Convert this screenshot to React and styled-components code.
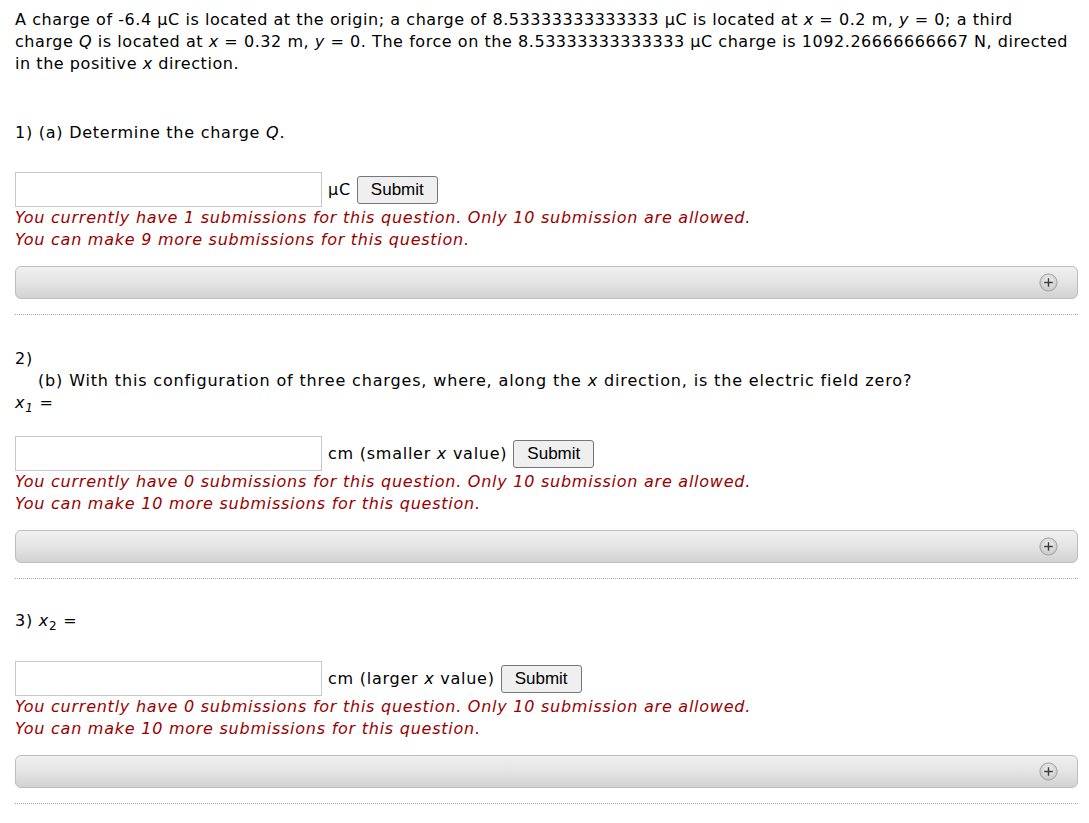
import React from "react";
import styled, { createGlobalStyle } from "styled-components";

const GlobalStyle = createGlobalStyle`
  html, body { margin: 0; padding: 0; background: #fff; }
  body { font-family: "DejaVu Sans", Verdana, sans-serif; color: #000; }
`;

const Page = styled.div`
  padding: 9px 11px 20px 15px;
  font-size: 16px;
  line-height: 22px;
  letter-spacing: 0.75px;
`;

const Intro = styled.p`
  margin: 0 0 47px;
  letter-spacing: 0.55px;
`;

const Section = styled.section`
  padding-top: ${(p) => p.$top || 0}px;
`;

const Question = styled.div`
  margin-bottom: ${(p) => p.$gap}px;
`;

const Indent = styled.div`
  padding-left: 23px;
  letter-spacing: 0.85px;
`;

const Sub = styled.sub`
  font-size: 12px;
  line-height: 0;
`;

const Row = styled.div`
  display: flex;
  align-items: center;
  height: 35px;
  gap: 6px;
`;

const Field = styled.input`
  box-sizing: border-box;
  width: 307px;
  height: 35px;
  border: 1px solid #c8c8c8;
  border-radius: 0;
  padding: 0 6px;
  font: inherit;
  outline: none;
`;

const Unit = styled.span`
  white-space: nowrap;
`;

const Button = styled.button`
  box-sizing: border-box;
  height: 28px;
  padding: 0 13px;
  font-family: "Liberation Sans", Arial, sans-serif;
  font-size: 17px;
  letter-spacing: 0;
  color: #000;
  background: #efefef;
  border: 1px solid #767676;
  border-radius: 3px;
`;

const Notice = styled.div`
  color: #990000;
  font-style: italic;
`;

const Bar = styled.div`
  box-sizing: border-box;
  margin-top: 15px;
  height: 33px;
  display: flex;
  align-items: center;
  justify-content: flex-end;
  padding-right: 19px;
  border: 1px solid #bdbdbd;
  border-radius: 6px;
  background: linear-gradient(to bottom, #f0f0f0 0%, #e4e4e4 50%, #d2d2d2 100%);
`;

const Rule = styled.hr`
  margin: 15px 0 0;
  border: 0;
  border-top: 1px dotted #a8a8a8;
  height: 0;
`;

const PlusIcon = () => (
  <svg width="19" height="19" viewBox="0 0 19 19" aria-hidden>
    <defs>
      <radialGradient id="pg" cx="50%" cy="40%" r="60%">
        <stop offset="0%" stopColor="#f4f4f4" />
        <stop offset="100%" stopColor="#c4c4c4" />
      </radialGradient>
    </defs>
    <circle cx="9.5" cy="9.5" r="8.6" fill="url(#pg)" stroke="#a3a3a3" strokeWidth="1" />
    <path d="M9.5 5.2v8.6M5.2 9.5h8.6" stroke="#3c3c3c" strokeWidth="1.5" />
  </svg>
);

const Answer = ({ unit, used, left }) => (
  <>
    <Row>
      <Field type="text" />
      <Unit>{unit}</Unit>
      <Button>Submit</Button>
    </Row>
    <Notice>
      You currently have {used} submissions for this question. Only 10 submission are allowed.
      <br />
      You can make {left} more submissions for this question.
    </Notice>
    <Bar>
      <PlusIcon />
    </Bar>
    <Rule />
  </>
);

export default function App() {
  return (
    <>
      <GlobalStyle />
      <Page>
        <Intro>
          A charge of -6.4 μC is located at the origin; a charge of 8.53333333333333 μC is located at{" "}
          <i>x</i> = 0.2 m, <i>y</i> = 0; a third
          <br />
          charge <i>Q</i> is located at <i>x</i> = 0.32 m, <i>y</i> = 0. The force on the
          8.53333333333333 μC charge is 1092.26666666667 N, directed
          <br />
          in the positive <i>x</i> direction.
        </Intro>

        <Section>
          <Question $gap={28}>
            1) (a) Determine the charge <i>Q</i>.
          </Question>
          <Answer unit="μC" used={1} left={9} />
        </Section>

        <Section $top={33}>
          <Question $gap={22}>
            2)
            <Indent>
              (b) With this configuration of three charges, where, along the <i>x</i> direction, is the
              electric field zero?
            </Indent>
            <i>x</i>
            <Sub>
              <i>1</i>
            </Sub>{" "}
            =
          </Question>
          <Answer
            unit={
              <>
                cm (smaller <i>x</i> value)
              </>
            }
            used={0}
            left={10}
          />
        </Section>

        <Section $top={31}>
          <Question $gap={29}>
            3) <i>x</i>
            <Sub>2</Sub> =
          </Question>
          <Answer
            unit={
              <>
                cm (larger <i>x</i> value)
              </>
            }
            used={0}
            left={10}
          />
        </Section>
      </Page>
    </>
  );
}
